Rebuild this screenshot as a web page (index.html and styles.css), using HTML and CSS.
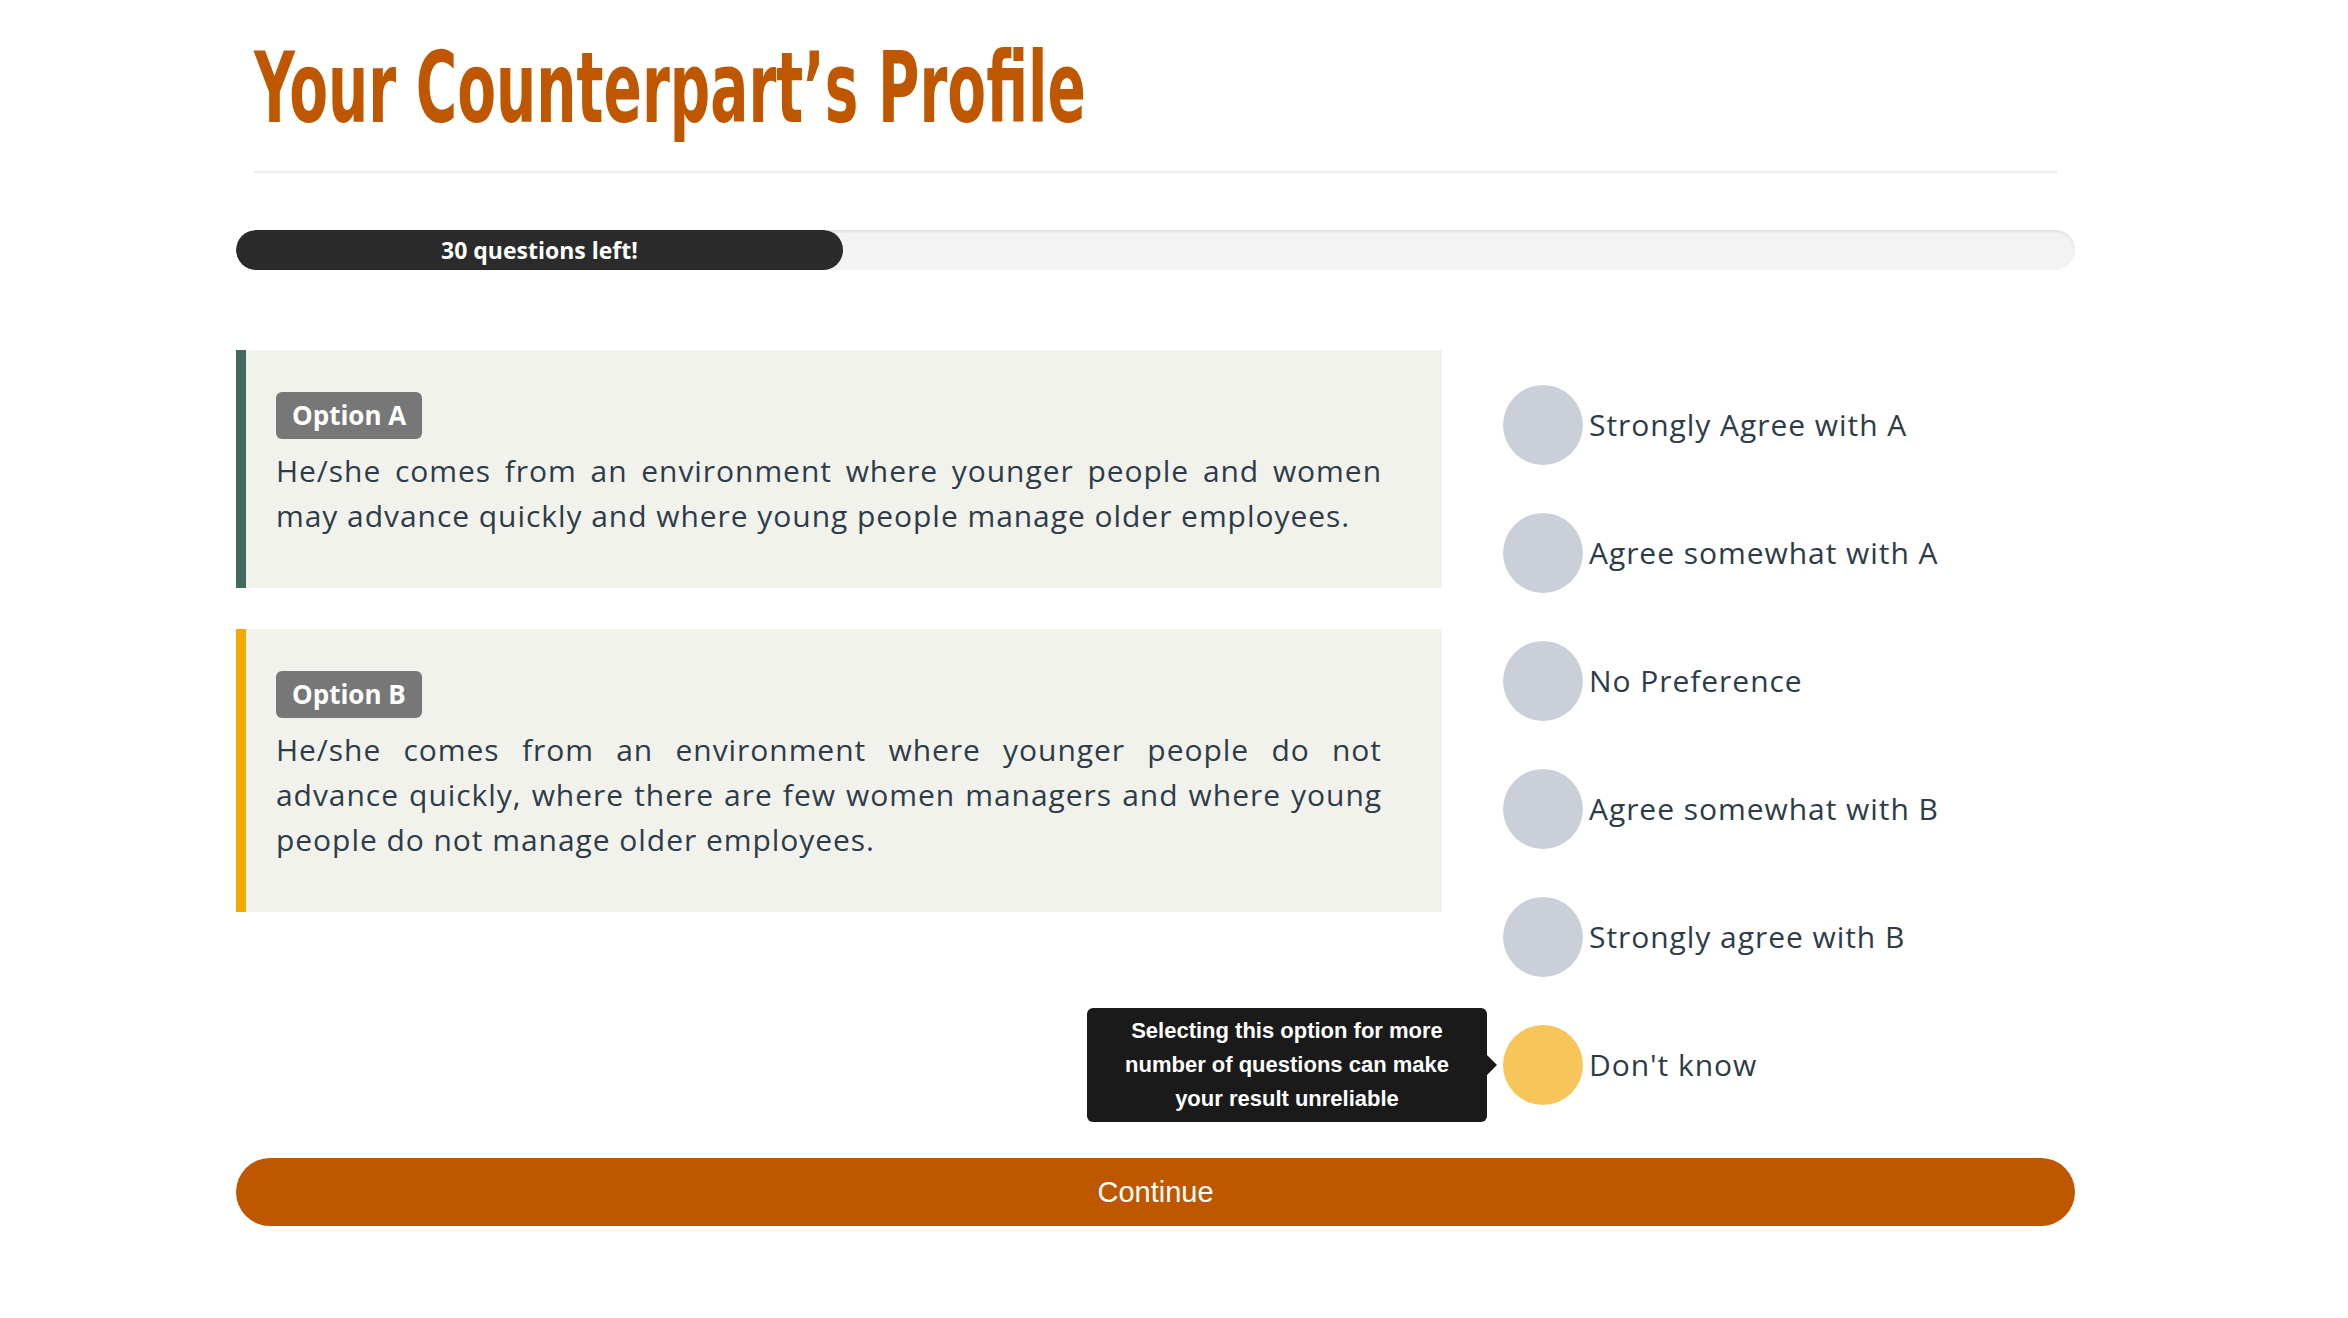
FILE: index.html
```html
<!DOCTYPE html>
<html lang="en">
<head>
<meta charset="utf-8">
<title>Your Counterpart’s Profile</title>
<link rel="stylesheet" href="styles.css">
</head>
<body>
<div class="container">
  <header class="page-header">
    <h1 class="title"><span class="title-text">Your Counterpart’s Profile</span></h1>
    <div class="divider"></div>
  </header>

  <div class="progress">
    <div class="progress-bar" style="width: 33%;">30 questions left!</div>
  </div>

  <div class="question">
    <div class="options">
      <div class="option option-a">
        <span class="badge">Option A</span>
        <p class="option-text">He/she comes from an environment where younger people and women may advance quickly and where young people manage older employees.</p>
      </div>
      <div class="option option-b">
        <span class="badge">Option B</span>
        <p class="option-text">He/she comes from an environment where younger people do not advance quickly, where there are few women managers and where young people do not manage older employees.</p>
      </div>
    </div>

    <ul class="answers">
      <li class="answer"><span class="dot"></span><span class="answer-label">Strongly Agree with A</span></li>
      <li class="answer"><span class="dot"></span><span class="answer-label">Agree somewhat with A</span></li>
      <li class="answer"><span class="dot"></span><span class="answer-label">No Preference</span></li>
      <li class="answer"><span class="dot"></span><span class="answer-label">Agree somewhat with B</span></li>
      <li class="answer"><span class="dot"></span><span class="answer-label">Strongly agree with B</span></li>
      <li class="answer answer-unknown">
        <div class="tooltip">Selecting this option for more number of questions can make your result unreliable</div>
        <span class="dot dot-yellow"></span><span class="answer-label">Don't know</span>
      </li>
    </ul>
  </div>

  <button class="continue" type="button">Continue</button>
</div>
</body>
</html>
```

FILE: styles.css
```css
html, body {
  margin: 0;
  padding: 0;
  background: #ffffff;
}

body {
  font-family: "Open Sans", "Noto Sans", sans-serif;
  color: #2e3c48;
}

.container {
  width: 1839px;
  margin-left: 236px;
  padding-bottom: 80px;
}

.page-header {
  padding: 0 18px;
}

.title {
  margin: 39px 0 0;
  height: 98px;
  font-family: "Liberation Sans Narrow", "DejaVu Sans Condensed", "Liberation Sans", sans-serif;
  font-weight: 700;
  font-size: 98px;
  line-height: 98px;
  color: #bf5700;
  white-space: nowrap;
}

.title-text {
  display: inline-block;
  transform: scaleX(0.641);
  transform-origin: left center;
}

.divider {
  margin-top: 34px;
  border-top: 2px solid #ececec;
}

.progress {
  margin-top: 57px;
  height: 40px;
  border-radius: 20px;
  background: #f3f3f3;
  box-shadow: inset 0 2px 3px rgba(0, 0, 0, 0.08);
  overflow: hidden;
}

.progress-bar {
  height: 40px;
  border-radius: 20px;
  background: #2b2b2b;
  color: #ffffff;
  font-weight: 700;
  font-size: 23px;
  line-height: 40px;
  text-align: center;
}

.question {
  display: flex;
  margin-top: 80px;
}

.options {
  width: 1206px;
  display: flex;
  flex-direction: column;
  gap: 41px;
}

.option {
  background: #f2f2ed;
  border-left: 10px solid #436a5a;
  padding: 42px 60px 50px 30px;
}

.option-b {
  border-left-color: #f2a900;
}

.badge {
  display: inline-block;
  height: 47px;
  padding: 0 16px;
  border-radius: 6px;
  background: #777777;
  color: #ffffff;
  font-weight: 700;
  font-size: 26px;
  line-height: 47px;
}

.option-text {
  margin: 9px 0 0;
  font-size: 30px;
  line-height: 45px;
  letter-spacing: 0.95px;
  text-align: justify;
}

.answers {
  list-style: none;
  margin: 0 0 0 61px;
  padding: 35px 0 0;
  display: flex;
  flex-direction: column;
  gap: 48px;
}

.answer {
  position: relative;
  display: flex;
  align-items: center;
  height: 80px;
}

.dot {
  width: 80px;
  height: 80px;
  border-radius: 50%;
  background: #cbd0d8;
  flex: none;
}

.dot-yellow {
  background: #f8c55a;
}

.answer-label {
  margin-left: 6px;
  font-size: 30px;
  line-height: 40px;
  letter-spacing: 0.95px;
  color: #2e3c48;
  white-space: nowrap;
}

.tooltip {
  position: absolute;
  right: 100%;
  top: 50%;
  transform: translateY(-50%);
  margin-right: 16px;
  width: 400px;
  box-sizing: border-box;
  padding: 6px 20px;
  border-radius: 6px;
  background: #1a1a1a;
  color: #ffffff;
  font-family: "Liberation Sans", Arial, sans-serif;
  font-weight: 700;
  font-size: 22px;
  line-height: 34px;
  text-align: center;
}

.tooltip::after {
  content: "";
  position: absolute;
  left: 100%;
  top: 50%;
  margin-top: -10px;
  border-style: solid;
  border-width: 10px 0 10px 10px;
  border-color: transparent transparent transparent #1a1a1a;
}

.continue {
  display: block;
  width: 100%;
  height: 68px;
  margin-top: 53px;
  border: none;
  border-radius: 34px;
  background: #bf5700;
  color: #ffffff;
  font-family: "Liberation Sans", Arial, sans-serif;
  font-size: 29px;
  cursor: pointer;
}
```
